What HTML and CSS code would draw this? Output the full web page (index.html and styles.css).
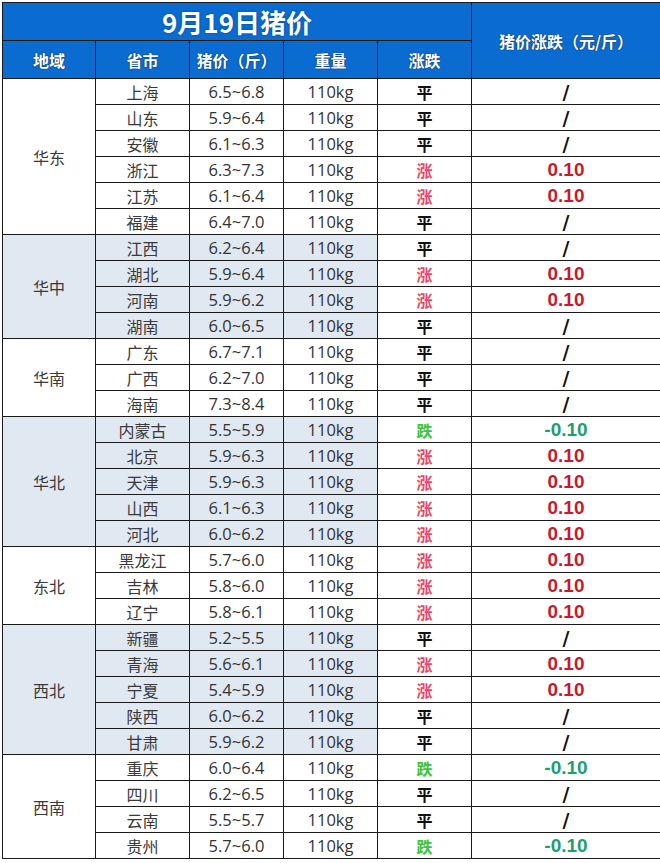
FILE: index.html
```html
<!DOCTYPE html>
<html lang="zh-CN">
<head>
<meta charset="utf-8">
<title>9月19日猪价</title>
<link rel="stylesheet" href="styles.css">
</head>
<body>
<table class="price">
  <colgroup>
    <col class="c-region"><col class="c-prov"><col class="c-price"><col class="c-weight"><col class="c-trend"><col class="c-change">
  </colgroup>
  <thead>
    <tr class="title-row">
      <th colspan="5" class="title">9月19日猪价</th>
      <th rowspan="2" class="head">猪价涨跌（元/斤）</th>
    </tr>
    <tr class="head-row">
      <th class="head">地域</th>
      <th class="head">省市</th>
      <th class="head">猪价（斤）</th>
      <th class="head">重量</th>
      <th class="head">涨跌</th>
    </tr>
  </thead>
  <tbody class="grp">
    <tr><td rowspan="6" class="region">华东</td><td class="prov">上海</td><td class="num">6.5~6.8</td><td class="num">110kg</td><td class="flat">平</td><td class="slash">/</td></tr>
    <tr><td class="prov">山东</td><td class="num">5.9~6.4</td><td class="num">110kg</td><td class="flat">平</td><td class="slash">/</td></tr>
    <tr><td class="prov">安徽</td><td class="num">6.1~6.3</td><td class="num">110kg</td><td class="flat">平</td><td class="slash">/</td></tr>
    <tr><td class="prov">浙江</td><td class="num">6.3~7.3</td><td class="num">110kg</td><td class="up">涨</td><td class="val-up">0.10</td></tr>
    <tr><td class="prov">江苏</td><td class="num">6.1~6.4</td><td class="num">110kg</td><td class="up">涨</td><td class="val-up">0.10</td></tr>
    <tr><td class="prov">福建</td><td class="num">6.4~7.0</td><td class="num">110kg</td><td class="flat">平</td><td class="slash">/</td></tr>
  </tbody>
  <tbody class="grp shaded">
    <tr><td rowspan="4" class="region">华中</td><td class="prov">江西</td><td class="num">6.2~6.4</td><td class="num">110kg</td><td class="flat">平</td><td class="slash">/</td></tr>
    <tr><td class="prov">湖北</td><td class="num">5.9~6.4</td><td class="num">110kg</td><td class="up">涨</td><td class="val-up">0.10</td></tr>
    <tr><td class="prov">河南</td><td class="num">5.9~6.2</td><td class="num">110kg</td><td class="up">涨</td><td class="val-up">0.10</td></tr>
    <tr><td class="prov">湖南</td><td class="num">6.0~6.5</td><td class="num">110kg</td><td class="flat">平</td><td class="slash">/</td></tr>
  </tbody>
  <tbody class="grp">
    <tr><td rowspan="3" class="region">华南</td><td class="prov">广东</td><td class="num">6.7~7.1</td><td class="num">110kg</td><td class="flat">平</td><td class="slash">/</td></tr>
    <tr><td class="prov">广西</td><td class="num">6.2~7.0</td><td class="num">110kg</td><td class="flat">平</td><td class="slash">/</td></tr>
    <tr><td class="prov">海南</td><td class="num">7.3~8.4</td><td class="num">110kg</td><td class="flat">平</td><td class="slash">/</td></tr>
  </tbody>
  <tbody class="grp shaded">
    <tr><td rowspan="5" class="region">华北</td><td class="prov">内蒙古</td><td class="num">5.5~5.9</td><td class="num">110kg</td><td class="down">跌</td><td class="val-down">-0.10</td></tr>
    <tr><td class="prov">北京</td><td class="num">5.9~6.3</td><td class="num">110kg</td><td class="up">涨</td><td class="val-up">0.10</td></tr>
    <tr><td class="prov">天津</td><td class="num">5.9~6.3</td><td class="num">110kg</td><td class="up">涨</td><td class="val-up">0.10</td></tr>
    <tr><td class="prov">山西</td><td class="num">6.1~6.3</td><td class="num">110kg</td><td class="up">涨</td><td class="val-up">0.10</td></tr>
    <tr><td class="prov">河北</td><td class="num">6.0~6.2</td><td class="num">110kg</td><td class="up">涨</td><td class="val-up">0.10</td></tr>
  </tbody>
  <tbody class="grp">
    <tr><td rowspan="3" class="region">东北</td><td class="prov">黑龙江</td><td class="num">5.7~6.0</td><td class="num">110kg</td><td class="up">涨</td><td class="val-up">0.10</td></tr>
    <tr><td class="prov">吉林</td><td class="num">5.8~6.0</td><td class="num">110kg</td><td class="up">涨</td><td class="val-up">0.10</td></tr>
    <tr><td class="prov">辽宁</td><td class="num">5.8~6.1</td><td class="num">110kg</td><td class="up">涨</td><td class="val-up">0.10</td></tr>
  </tbody>
  <tbody class="grp shaded">
    <tr><td rowspan="5" class="region">西北</td><td class="prov">新疆</td><td class="num">5.2~5.5</td><td class="num">110kg</td><td class="flat">平</td><td class="slash">/</td></tr>
    <tr><td class="prov">青海</td><td class="num">5.6~6.1</td><td class="num">110kg</td><td class="up">涨</td><td class="val-up">0.10</td></tr>
    <tr><td class="prov">宁夏</td><td class="num">5.4~5.9</td><td class="num">110kg</td><td class="up">涨</td><td class="val-up">0.10</td></tr>
    <tr><td class="prov">陕西</td><td class="num">6.0~6.2</td><td class="num">110kg</td><td class="flat">平</td><td class="slash">/</td></tr>
    <tr><td class="prov">甘肃</td><td class="num">5.9~6.2</td><td class="num">110kg</td><td class="flat">平</td><td class="slash">/</td></tr>
  </tbody>
  <tbody class="grp">
    <tr><td rowspan="4" class="region">西南</td><td class="prov">重庆</td><td class="num">6.0~6.4</td><td class="num">110kg</td><td class="down">跌</td><td class="val-down">-0.10</td></tr>
    <tr><td class="prov">四川</td><td class="num">6.2~6.5</td><td class="num">110kg</td><td class="flat">平</td><td class="slash">/</td></tr>
    <tr><td class="prov">云南</td><td class="num">5.5~5.7</td><td class="num">110kg</td><td class="flat">平</td><td class="slash">/</td></tr>
    <tr><td class="prov">贵州</td><td class="num">5.7~6.0</td><td class="num">110kg</td><td class="down">跌</td><td class="val-down">-0.10</td></tr>
  </tbody>
</table>
</body>
</html>
```
FILE: styles.css
```css
html, body {
  margin: 0;
  padding: 0;
  background: #ffffff;
}
body {
  padding: 2px 0 0 2px;
  font-family: "Open Sans", "Noto Sans CJK SC", sans-serif;
  color: #333333;
}
.price {
  border-collapse: collapse;
  table-layout: fixed;
  width: 658px;
}
.c-region { width: 93px; }
.c-prov { width: 94px; }
.c-price { width: 94px; }
.c-weight { width: 94px; }
.c-trend { width: 94px; }
.c-change { width: 189px; }

.price th, .price td {
  border: 1px solid #1a1a1a;
  padding: 0;
  text-align: center;
  vertical-align: middle;
  white-space: nowrap;
}
.title-row, .head-row { height: 38px; }
.price thead th {
  background: #0a6bd0;
  color: #ffffff;
  font-family: "Noto Sans CJK SC", sans-serif;
  font-weight: 700;
}
.title {
  font-size: 26px;
  line-height: 1;
  text-shadow: 0 0 2px #063d80;
}
.head {
  font-size: 16px;
  text-shadow: 0 0 1px #0b2a55, 0 0 1px #0b2a55;
}
.price tbody tr { height: 26px; }
.price tbody td { line-height: 20px; }
.region, .prov {
  font-family: "Noto Sans CJK SC", sans-serif;
  font-size: 16px;
  color: #3a3a3a;
}
.num {
  font-size: 16.5px;
  color: #333333;
}
.shaded .region, .shaded .prov, .shaded .num {
  background: #e0e8f2;
}
.flat, .up, .down {
  font-family: "Noto Sans CJK SC", sans-serif;
  font-size: 16px;
  font-weight: 700;
}
.flat { color: #111111; }
.up { color: #e5486a; font-weight: 600; }
.down { color: #3cc43c; font-weight: 600; }
.slash, .val-up, .val-down {
  font-family: "Liberation Sans", Arial, sans-serif;
  font-weight: 700;
  font-size: 19px;
}
.slash {
  font-family: "DejaVu Sans", sans-serif;
  font-weight: 700;
  font-size: 19px;
  color: #111111;
}
.val-up { color: #c8192e; }
.val-down { color: #1f9f6c; }
```
